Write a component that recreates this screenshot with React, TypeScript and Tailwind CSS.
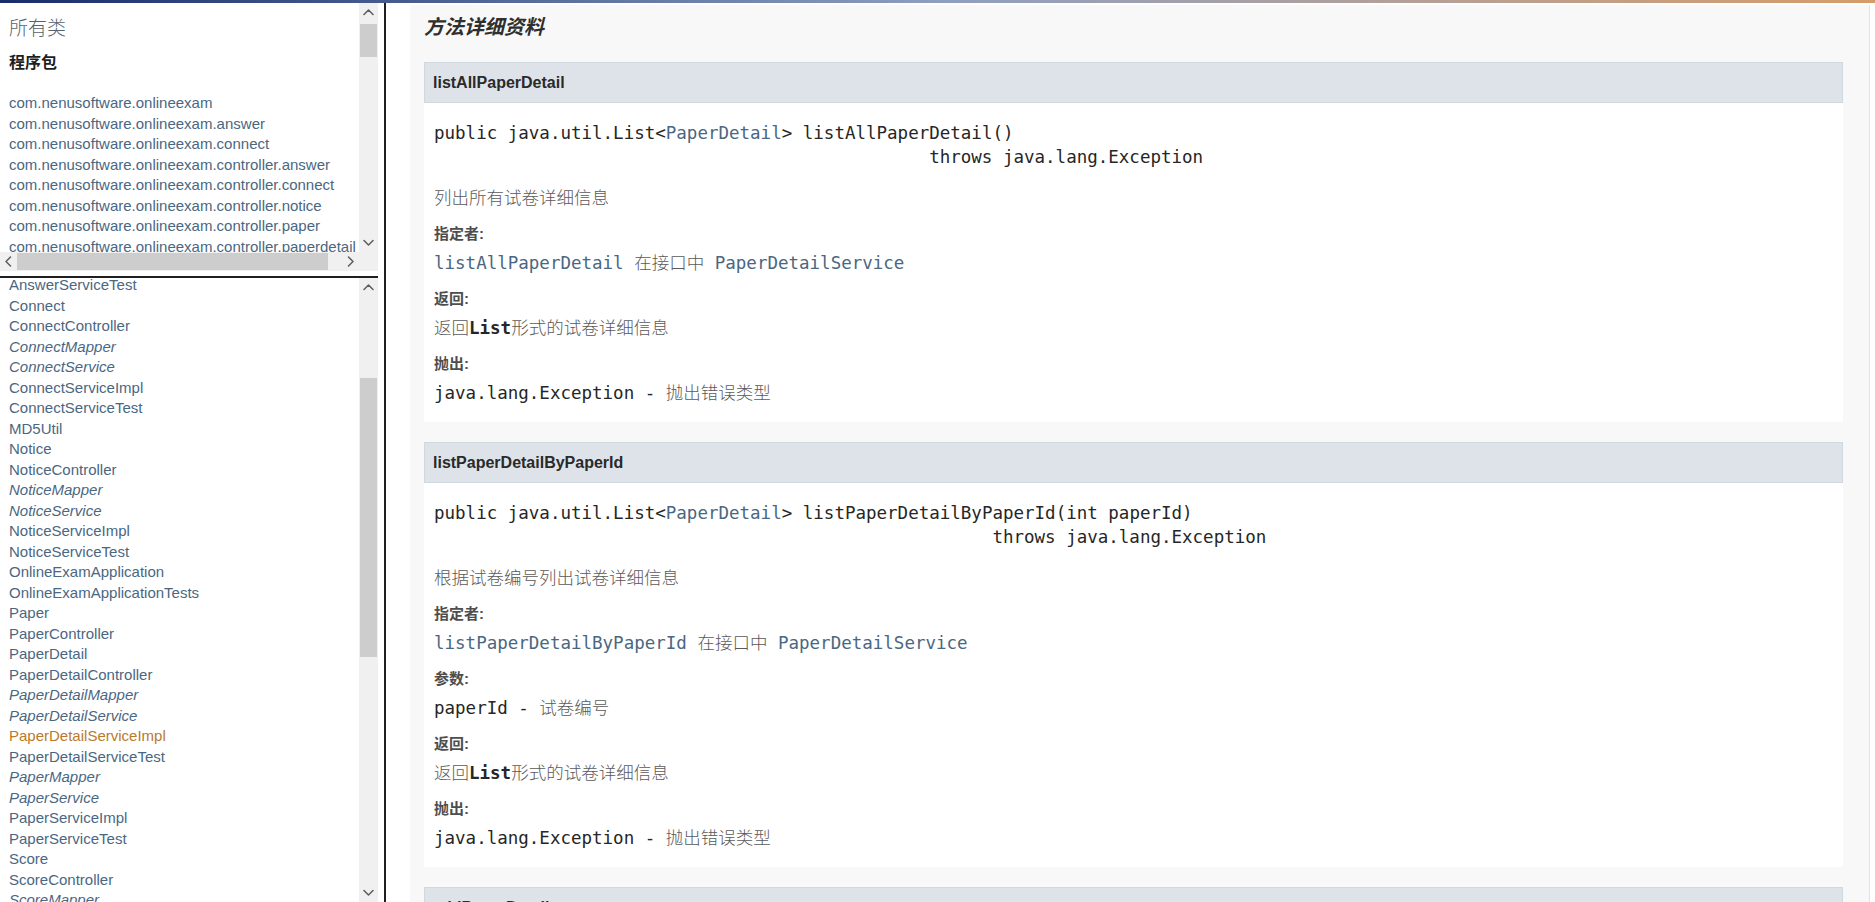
import React from "react";

const SANS = "font-['Liberation_Sans','Noto_Sans_CJK_SC',sans-serif]";
const MONO = "font-['DejaVu_Sans_Mono','Noto_Sans_CJK_SC',monospace]";
const CJK = "font-['Liberation_Serif','Noto_Sans_CJK_SC',serif]";

const packages = [
  "com.nenusoftware.onlineexam",
  "com.nenusoftware.onlineexam.answer",
  "com.nenusoftware.onlineexam.connect",
  "com.nenusoftware.onlineexam.controller.answer",
  "com.nenusoftware.onlineexam.controller.connect",
  "com.nenusoftware.onlineexam.controller.notice",
  "com.nenusoftware.onlineexam.controller.paper",
  "com.nenusoftware.onlineexam.controller.paperdetail",
  "com.nenusoftware.onlineexam.controller.score",
];

// [name, isInterface, isVisited]
const classes: [string, boolean, boolean][] = [
  ["AnswerServiceTest", false, false],
  ["Connect", false, false],
  ["ConnectController", false, false],
  ["ConnectMapper", true, false],
  ["ConnectService", true, false],
  ["ConnectServiceImpl", false, false],
  ["ConnectServiceTest", false, false],
  ["MD5Util", false, false],
  ["Notice", false, false],
  ["NoticeController", false, false],
  ["NoticeMapper", true, false],
  ["NoticeService", true, false],
  ["NoticeServiceImpl", false, false],
  ["NoticeServiceTest", false, false],
  ["OnlineExamApplication", false, false],
  ["OnlineExamApplicationTests", false, false],
  ["Paper", false, false],
  ["PaperController", false, false],
  ["PaperDetail", false, false],
  ["PaperDetailController", false, false],
  ["PaperDetailMapper", true, false],
  ["PaperDetailService", true, false],
  ["PaperDetailServiceImpl", false, true],
  ["PaperDetailServiceTest", false, false],
  ["PaperMapper", true, false],
  ["PaperService", true, false],
  ["PaperServiceImpl", false, false],
  ["PaperServiceTest", false, false],
  ["Score", false, false],
  ["ScoreController", false, false],
  ["ScoreMapper", true, false],
  ["ScoreService", true, false],
];

const UP = "M1 7.5 L5.5 3 L10 7.5";
const DOWN = "M1 3.5 L5.5 8 L10 3.5";
const LEFT = "M7.5 1 L3 5.5 L7.5 10";
const RIGHT = "M3.5 1 L8 5.5 L3.5 10";

function Arrow({ d }: { d: string }) {
  return (
    <svg width="11" height="11" viewBox="0 0 11 11" className="block">
      <path d={d} fill="none" stroke="#5c5c5c" strokeWidth="1.5" strokeLinecap="round" strokeLinejoin="round" />
    </svg>
  );
}

function VScroll({ thumb }: { thumb: string }) {
  return (
    <div className="w-[19px] shrink-0 bg-[#f0f0f0] flex flex-col">
      <div className="h-[19px] flex items-center justify-center">
        <Arrow d={UP} />
      </div>
      <div className="flex-1 min-h-0 px-[1px]">
        <div className={thumb} />
      </div>
      <div className="h-[19px] flex items-center justify-center">
        <Arrow d={DOWN} />
      </div>
    </div>
  );
}

function Dt({ children }: { children: React.ReactNode }) {
  return (
    <dt className={`${SANS} mt-[14px] leading-[20px] text-[15px] font-bold text-[#4e4e4e]`}>{children}</dt>
  );
}

function Dd({ children }: { children: React.ReactNode }) {
  return <dd className={`${MONO} mt-[7px] leading-[24px] text-[17.5px] text-[#262626]`}>{children}</dd>;
}

function Zh({ children }: { children: React.ReactNode }) {
  return <span className={`${CJK} font-light text-[#5a5a5a]`}>{children}</span>;
}

function Link({ children }: { children: React.ReactNode }) {
  return <span className="text-[#4a6782]">{children}</span>;
}

function MethodHeader({ name }: { name: string }) {
  return (
    <div className={`${SANS} h-[41px] flex items-center pl-[8px] bg-[#dee3e9] border border-[#d0d9e0] text-[16px] font-bold text-[#2a2a2a]`}>
      {name}
    </div>
  );
}

export default function App() {
  return (
    <div className="w-full h-screen overflow-hidden bg-white flex flex-col">
      {/* window top edge */}
      <div className="h-[3px] shrink-0 bg-linear-to-r from-[#1a2c6a] via-[#8d9fbf] to-[#d69c68]" />

      <div className="flex flex-1 min-h-0">
        {/* left frames */}
        <div className="w-[378px] shrink-0 flex flex-col">
          {/* packages frame */}
          <div className="h-[268px] shrink-0 flex flex-col">
            <div className="flex flex-1 min-h-0">
              <div className={`${SANS} flex-1 min-w-0 overflow-hidden pl-[9px] whitespace-nowrap`}>
                <h1 className="mt-[13px] h-[26px] leading-[26px] text-[19px] font-light text-[#56626d]">所有类</h1>
                <h2 className="mt-[10px] leading-[22px] text-[16px] font-bold text-[#1e1e1e]">程序包</h2>
                <ul className="mt-[19px]">
                  {packages.map((p) => (
                    <li key={p} className="leading-[20.5px] text-[15px] text-[#4a6782]">
                      {p}
                    </li>
                  ))}
                </ul>
              </div>
              <VScroll thumb="mt-[2px] h-[33px] bg-[#cdcdcd]" />
            </div>
            <div className="h-[19px] shrink-0 flex bg-[#f0f0f0]">
              <div className="w-[17px] flex items-center justify-center">
                <Arrow d={LEFT} />
              </div>
              <div className="flex-1 py-[1px]">
                <div className="w-[311px] h-full bg-[#cdcdcd]" />
              </div>
              <div className="w-[17px] flex items-center justify-center">
                <Arrow d={RIGHT} />
              </div>
              <div className="w-[19px]" />
            </div>
          </div>
          <div className="h-[5px] shrink-0 bg-white" />
          <div className="h-[2px] shrink-0 bg-[#1f1f1f]" />

          {/* classes frame */}
          <div className="flex flex-1 min-h-0">
            <div className={`${SANS} flex-1 min-w-0 overflow-hidden pl-[9px] whitespace-nowrap`}>
              <ul className="-mt-[3px]">
                {classes.map(([name, iface, visited]) => (
                  <li
                    key={name}
                    className={`leading-[20.5px] text-[15px] ${iface ? "italic" : ""} ${visited ? "text-[#bb7a2a]" : "text-[#4a6782]"}`}
                  >
                    {name}
                  </li>
                ))}
              </ul>
            </div>
            <VScroll thumb="mt-[81px] h-[279px] bg-[#cdcdcd]" />
          </div>
        </div>

        <div className="w-[6px] shrink-0 bg-white" />
        <div className="w-[2px] shrink-0 bg-[#1f1f1f]" />

        {/* content frame */}
        <div className="flex-1 min-w-0 pl-[24px] pr-[5px] pt-[2px] bg-white">
          <div className="h-full overflow-hidden bg-[#f8f8f8] border-r border-[#e2e2e2] pl-[14px] pr-[26px] pt-[8px]">
            <h3 className={`${SANS} h-[28px] leading-[28px] text-[20px] font-bold italic text-[#2f2f2f]`}>方法详细资料</h3>

            {/* listAllPaperDetail */}
            <div className="mt-[21px]">
              <MethodHeader name="listAllPaperDetail" />
              <div className="bg-white pl-[10px] pt-[18px] pb-[17px]">
                <pre className={`${MONO} leading-[24px] text-[17.5px] text-[#262626]`}>
                  {"public java.util.List<"}
                  <Link>PaperDetail</Link>
                  {"> listAllPaperDetail()\n" + " ".repeat(47) + "throws java.lang.Exception"}
                </pre>
                <div className={`${CJK} mt-[17px] leading-[24px] text-[17.5px] font-light text-[#5a5a5a]`}>列出所有试卷详细信息</div>
                <dl>
                  <Dt>指定者:</Dt>
                  <Dd>
                    <Link>listAllPaperDetail</Link> <Zh>在接口中</Zh> <Link>PaperDetailService</Link>
                  </Dd>
                  <Dt>返回:</Dt>
                  <Dd>
                    <Zh>返回</Zh>
                    <span className="font-semibold">List</span>
                    <Zh>形式的试卷详细信息</Zh>
                  </Dd>
                  <Dt>抛出:</Dt>
                  <Dd>
                    java.lang.Exception - <Zh>抛出错误类型</Zh>
                  </Dd>
                </dl>
              </div>
            </div>

            {/* listPaperDetailByPaperId */}
            <div className="mt-[20px]">
              <MethodHeader name="listPaperDetailByPaperId" />
              <div className="bg-white pl-[10px] pt-[18px] pb-[17px]">
                <pre className={`${MONO} leading-[24px] text-[17.5px] text-[#262626]`}>
                  {"public java.util.List<"}
                  <Link>PaperDetail</Link>
                  {"> listPaperDetailByPaperId(int paperId)\n" + " ".repeat(53) + "throws java.lang.Exception"}
                </pre>
                <div className={`${CJK} mt-[17px] leading-[24px] text-[17.5px] font-light text-[#5a5a5a]`}>根据试卷编号列出试卷详细信息</div>
                <dl>
                  <Dt>指定者:</Dt>
                  <Dd>
                    <Link>listPaperDetailByPaperId</Link> <Zh>在接口中</Zh> <Link>PaperDetailService</Link>
                  </Dd>
                  <Dt>参数:</Dt>
                  <Dd>
                    paperId - <Zh>试卷编号</Zh>
                  </Dd>
                  <Dt>返回:</Dt>
                  <Dd>
                    <Zh>返回</Zh>
                    <span className="font-semibold">List</span>
                    <Zh>形式的试卷详细信息</Zh>
                  </Dd>
                  <Dt>抛出:</Dt>
                  <Dd>
                    java.lang.Exception - <Zh>抛出错误类型</Zh>
                  </Dd>
                </dl>
              </div>
            </div>

            {/* next method, cut off by the frame */}
            <div className="mt-[20px]">
              <MethodHeader name="addPaperDetail" />
            </div>
          </div>
        </div>
      </div>
    </div>
  );
}
